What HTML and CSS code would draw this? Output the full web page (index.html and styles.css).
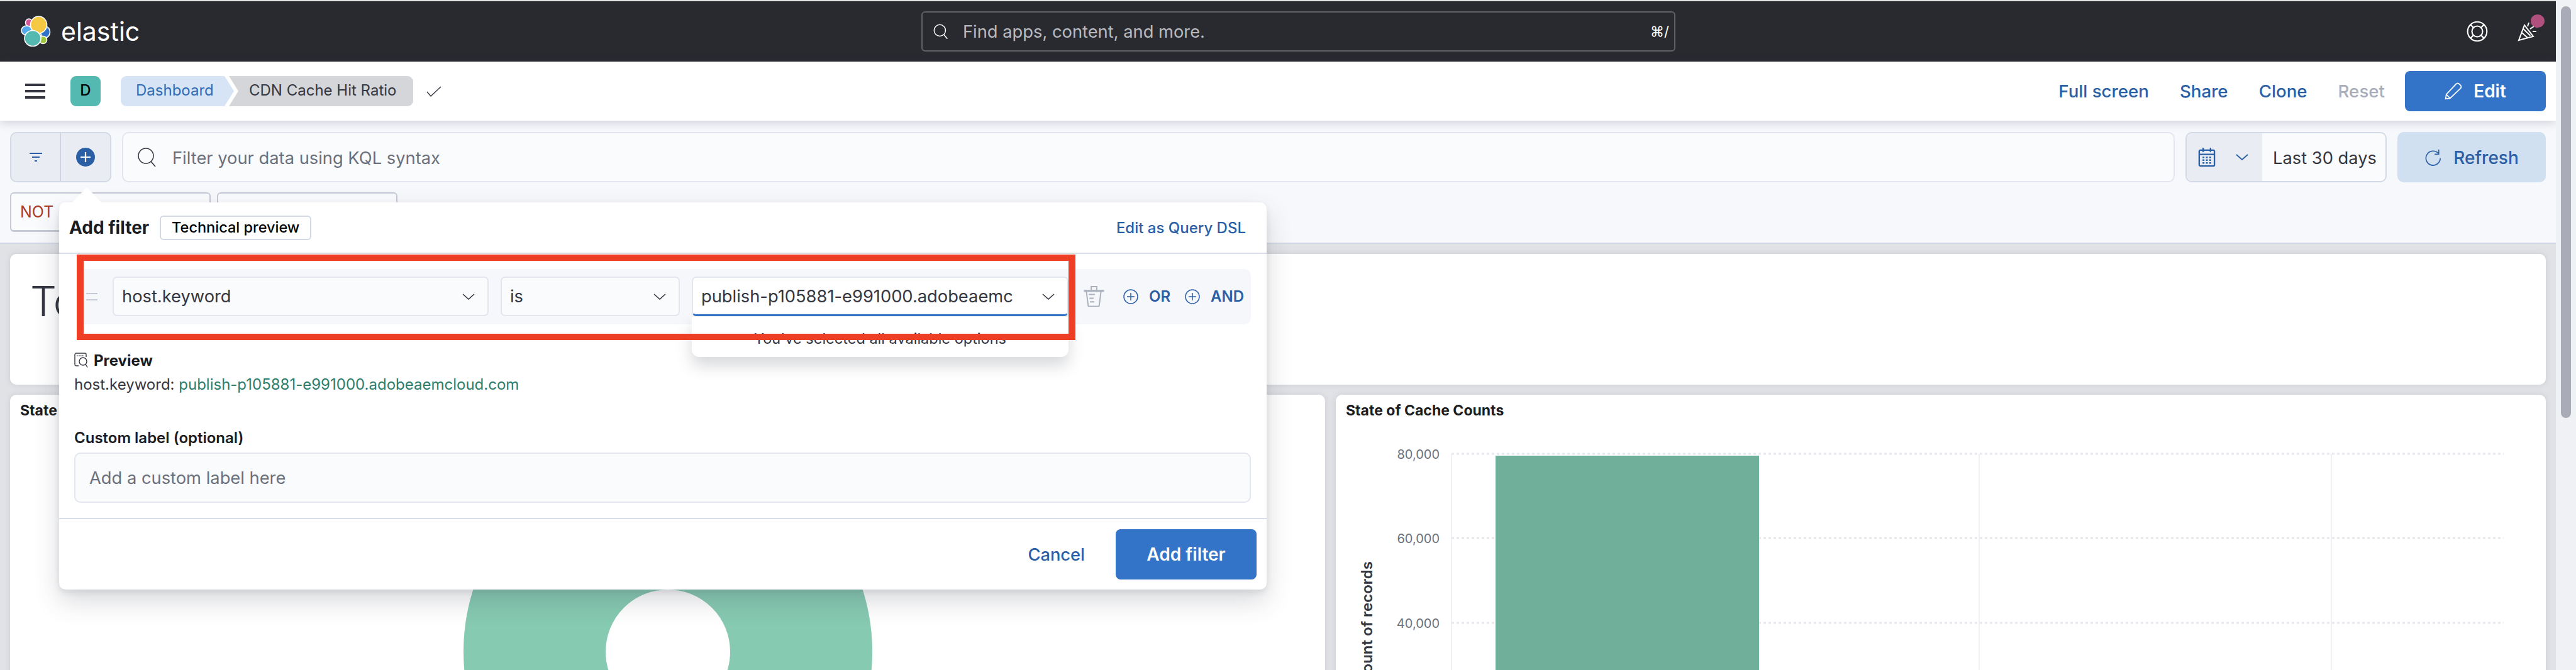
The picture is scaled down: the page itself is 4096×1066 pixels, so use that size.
FILE: index.html
```html
<!DOCTYPE html>
<html>
<head>
<meta charset="utf-8">
<title>CDN Cache Hit Ratio - Elastic</title>
<link rel="stylesheet" href="styles.css">
</head>
<body>
<div id="page">
    <header class="global-header">
        <div class="brand">
            <svg class="logo" width="50" height="50" viewBox="32 25 48 50">
                <g stroke="#fff" stroke-width="1.6">
                    <ellipse cx="45" cy="36" rx="5.5" ry="6" fill="#d6569a"/>
                    <ellipse cx="41.5" cy="48.5" rx="8.5" ry="7.5" fill="#55a9ea"/>
                    <ellipse cx="71" cy="51" rx="7.5" ry="9" fill="#2f72c9"/>
                    <ellipse cx="60.5" cy="39.5" rx="13" ry="13.5" fill="#f6c945"/>
                    <ellipse cx="67.5" cy="63.5" rx="6" ry="6" fill="#9dc63d"/>
                    <ellipse cx="51" cy="61" rx="13" ry="12.5" fill="#54b9b0"/>
                </g>
            </svg>
            <span class="wordmark">elastic</span>
        </div>
        <div class="global-search">
            <svg class="icon" width="26" height="26" viewBox="0 0 16 16" fill="none" stroke="#fff" stroke-width="0.9"><circle cx="7" cy="7" r="5.6"/><path d="M11 11.2l3.4 4"/></svg>
            <span class="global-search-text">Find apps, content, and more.</span>
            <span class="shortcut">⌘/</span>
        </div>
        <div class="global-icons">
            <svg width="34" height="34" viewBox="0 0 16 16" fill="none" stroke="#fff" stroke-width="1"><circle cx="8" cy="8" r="7.2"/><circle cx="8" cy="8" r="4"/><path d="M3 3l2.2 2.2M13 3l-2.2 2.2M3 13l2.2-2.2M13 13l-2.2-2.2"/></svg>
            <span class="cheer">
                <svg width="34" height="32" viewBox="0 0 16 16" fill="none" stroke="#fff" stroke-width="1"><path d="M1 15l4.5-12 7 9z"/><path d="M3.4 9l4.6 4M4.6 6l5.6 5.4"/><path d="M8 4l1-3M10 6l3-2M12 8h3"/></svg>
                <span class="cheer-dot"></span>
            </span>
        </div>
    </header>

    <div class="app-header">
        <span class="hamburger"><i></i><i></i><i></i></span>
        <span class="space-badge">D</span>
        <div class="crumbs">
            <span class="crumb crumb-link">Dashboard</span>
            <span class="crumb crumb-current">CDN Cache Hit Ratio</span>
        </div>
        <svg class="saved" width="24" height="17" viewBox="0 0 24 17" fill="none" stroke="#343741" stroke-width="1.400"><path d="M1 9l6 7L23 1"/></svg>
        <nav class="app-menu">
            <a>Full screen</a>
            <a>Share</a>
            <a>Clone</a>
            <a class="disabled">Reset</a>
            <button class="btn-fill btn-edit">
                <svg width="28" height="28" viewBox="0 0 16 16" fill="none" stroke="#fff" stroke-width="1"><path d="M1 15l.6-4L10.500 1.500c.8-.8 2-.8 2.800 0l1.200 1.200c.8.800.8 2 0 2.800L5 14.500z"/><path d="M1.600 11L5 14.500"/></svg>
                Edit
            </button>
        </nav>
    </div>

    <div class="query-bar">
        <div class="filter-group">
            <span class="filter-btn">
                <svg width="20" height="14" viewBox="0 0 20 14" fill="#2a5fa6"><rect width="20" height="2"/><rect x="4" y="6" width="12" height="2"/><rect x="8" y="12" width="4" height="2"/></svg>
            </span>
            <span class="filter-btn">
                <svg width="30" height="30" viewBox="0 0 30 30"><circle cx="15" cy="15" r="15" fill="#2a5fa6"/><path d="M15 7v16M7 15h16" stroke="#fff" stroke-width="2.200"/></svg>
            </span>
        </div>
        <div class="query-input">
            <svg class="icon" width="32" height="32" viewBox="0 0 16 16" fill="none" stroke="#343741" stroke-width="0.8"><circle cx="7" cy="7" r="6"/><path d="M11 11.500l3.500 4"/></svg>
            <span class="placeholder">Filter your data using KQL syntax</span>
        </div>
        <div class="date-picker">
            <span class="date-prepend">
                <svg width="28" height="31" viewBox="0 0 28 32" fill="none" stroke="#2a5fa6" stroke-width="2.400"><rect x="1.500" y="4" width="25" height="26" rx="2"/><path d="M1.500 11h25M8 0v7M20 0v7"/><path d="M7 16h14M7 20.500h14M7 25h14" stroke-width="2.600" stroke-dasharray="3 2.500"/></svg>
                <svg width="20" height="10" viewBox="0 0 20 10" fill="none" stroke="#2a5fa6" stroke-width="1.800"><path d="M1 1l9 8 9-8"/></svg>
            </span>
            <span class="date-text">Last 30 days</span>
        </div>
        <button class="btn-refresh">
            <svg width="26" height="26" viewBox="0 0 16 16" fill="none" stroke="#2a5fa6" stroke-width="1"><path d="M13.500 3.500a7 7 0 1 0 2 5"/><path d="M14 0v4.500H10"/></svg>
            Refresh
        </button>
    </div>

    <div class="pill-row">
        <span class="pill pill-one"><b>NOT</b> u</span>
        <span class="pill pill-two"></span>
    </div>

    <main class="panels">
        <section class="panel panel-wide"><span class="metric-title">Total</span></section>
        <section class="panel">
            <h3>State of Cache</h3>
            <svg class="chart" width="2091" height="400">
                <circle cx="1046" cy="359" r="212" fill="none" stroke="#86cab1" stroke-width="226"/>
            </svg>
        </section>
        <section class="panel">
            <h3>State of Cache Counts</h3>
            <svg class="chart" width="1924" height="400">
                <g stroke="#ecedf1" stroke-width="1.500">
                    <path d="M184 44v356M1023 44v356M1583 44v356"/>
                </g>
                <g stroke="#e6e8ee" stroke-width="3" stroke-dasharray="4 4">
                    <path d="M184 44h1673M184 178h1673M184 313h1673"/>
                </g>
                <rect x="254" y="47" width="419" height="353" fill="#70b09a"/>
                <g class="tick">
                    <text x="165" y="52">80,000</text>
                    <text x="165" y="186">60,000</text>
                    <text x="165" y="321">40,000</text>
                </g>
                <text class="axis-title" transform="translate(58 215) rotate(-90)">Count of records</text>
            </svg>
        </section>
    </main>

    <div class="popover">
        <span class="popover-arrow"></span>
        <div class="popover-head">
            <strong class="popover-title">Add filter</strong>
            <span class="tech-badge">Technical preview</span>
            <a class="edit-dsl">Edit as Query DSL</a>
        </div>
        <div class="filter-row">
            <span class="handle"></span>
            <div class="select select-field">host.keyword
                <svg class="chev" width="20" height="10" viewBox="0 0 20 10" fill="none" stroke="#343741" stroke-width="1.600"><path d="M1 1l9 8 9-8"/></svg>
            </div>
            <div class="select select-op">is
                <svg class="chev" width="20" height="10" viewBox="0 0 20 10" fill="none" stroke="#343741" stroke-width="1.600"><path d="M1 1l9 8 9-8"/></svg>
            </div>
            <div class="select select-value">
                <span class="value-text">publish-p105881-e991000.adobeaemcloud.com</span>
                <svg class="chev" width="20" height="10" viewBox="0 0 20 10" fill="none" stroke="#343741" stroke-width="1.600"><path d="M1 1l9 8 9-8"/></svg>
                <div class="value-menu">You've selected all available options</div>
            </div>
            <svg class="trash" width="33" height="33" viewBox="0 0 33 34" fill="none" stroke="#a9b0bd" stroke-width="2"><path d="M0 8h33" stroke-width="3"/><path d="M12 8V1h9v7M4 9l3 23c0 1 1 1.500 2 1.500h14c1 0 2-.5 2-1.500l3-23"/><path d="M8 14h10M9 20h7M10 26h7"/></svg>
            <span class="logic">
                <svg width="24" height="24" viewBox="0 0 24 24" fill="none" stroke="#2a5fa6" stroke-width="1.500"><circle cx="12" cy="12" r="11"/><path d="M12 6v12M6 12h12"/></svg>OR
            </span>
            <span class="logic">
                <svg width="24" height="24" viewBox="0 0 24 24" fill="none" stroke="#2a5fa6" stroke-width="1.500"><circle cx="12" cy="12" r="11"/><path d="M12 6v12M6 12h12"/></svg>AND
            </span>
        </div>
        <div class="preview">
            <div class="preview-label">
                <svg width="24" height="24" viewBox="0 0 24 24" fill="none" stroke="#343741" stroke-width="1.400"><path d="M7 21H3c-1 0-2-1-2-2V3c0-1 1-2 2-2h14c1 0 2 1 2 2v4"/><path d="M4 5h12" stroke-dasharray="1.500 1.500"/><circle cx="14" cy="14" r="6"/><path d="M18 18.500l3 5"/></svg>
                Preview
            </div>
            <div class="preview-value">host.keyword: <span class="green">publish-p105881-e991000.adobeaemcloud.com</span></div>
        </div>
        <label class="custom-label">Custom label (optional)</label>
        <div class="custom-input">Add a custom label here</div>
        <div class="popover-foot">
            <a class="cancel">Cancel</a>
            <button class="btn-fill btn-add">Add filter</button>
        </div>
    </div>

    <div class="callout"></div>
</div>
<aside class="scrollbar"><span class="thumb"></span></aside>
</body>
</html>
```

FILE: styles.css
```css
html, body {
    margin: 0;
    height: 1066px;
    overflow: hidden;
}

body {
    display: flex;
    font-family: Inter, "Noto Sans", sans-serif;
    font-size: 27.3px;
    color: #343741;
    background-color: #f7f8fb;
}

#page {
    position: relative;
    width: 4064px;
    height: 1066px;
    overflow: hidden;
}

.scrollbar {
    width: 32px;
    padding: 10px 8px 0;
    box-sizing: border-box;
    background-color: #f0f1f5;
}

.thumb {
    display: block;
    height: 655px;
    border-radius: 8px;
    background-color: #a9acb6;
}

/* dark bar */
.global-header {
    display: flex;
    align-items: center;
    height: 96px;
    border-top: 2px solid #e2e2e4;
    padding: 0 28px 0 32px;
    background-color: #292a2f;
}

.brand {
    display: flex;
    align-items: center;
    width: 1433px;
}

.logo {
    margin-right: 15px;
}

.wordmark {
    color: #fff;
    font-size: 41px;
    line-height: 50px;
}

.global-search {
    display: flex;
    align-items: center;
    width: 1199px;
    height: 64px;
    box-sizing: border-box;
    border: 2px solid #5f6166;
    border-radius: 6px;
    padding: 0 8px 0 16px;
    color: #b8bac0;
}

.global-search-text {
    flex: 1;
    margin-left: 22px;
}

.shortcut {
    color: #fff;
    font-size: 22px;
}

.global-icons {
    display: flex;
    align-items: center;
    gap: 46px;
    margin-left: auto;
}

.cheer {
    position: relative;
    display: flex;
}

.cheer-dot {
    position: absolute;
    top: -11px;
    right: -10px;
    width: 22px;
    height: 21px;
    border-radius: 50%;
    background-color: #b0507f;
}

/* breadcrumb bar */
.app-header {
    display: flex;
    align-items: center;
    height: 94px;
    padding: 0 16px 0 40px;
    background-color: #fff;
    box-shadow: 0 3px 14px rgba(60, 70, 100, 0.22);
    position: relative;
}

.hamburger {
    display: flex;
    flex-direction: column;
    justify-content: space-between;
    width: 32px;
    height: 24px;
    margin-right: 40px;
}

.hamburger i {
    height: 4px;
    background-color: #343741;
}

.space-badge {
    width: 48px;
    height: 48px;
    line-height: 46px;
    border-radius: 9px;
    background-color: #54b9b0;
    color: #000;
    text-align: center;
    font-size: 24px;
    font-weight: 500;
    margin-right: 32px;
}

.crumbs {
    display: flex;
    height: 48px;
    font-size: 24px;
    line-height: 46px;
}

.crumb {
    padding: 0 24px;
    white-space: nowrap;
}

.crumb-link {
    width: 180px;
    box-sizing: border-box;
    padding-right: 0;
    background-color: #d6e4f5;
    color: #2f6cb5;
    border-radius: 9px 0 0 9px;
    clip-path: polygon(0 0, 165px 0, 180px 50%, 165px 100%, 0 100%);
}

.crumb-current {
    width: 293px;
    box-sizing: border-box;
    margin-left: -8px;
    padding-left: 32px;
    background-color: #d5d6d9;
    border-radius: 0 9px 9px 0;
    clip-path: polygon(0 0, 100% 0, 100% 100%, 0 100%, 15px 50%);
}

.saved {
    margin-left: 21px;
}

.app-menu {
    display: flex;
    align-items: center;
    margin-left: auto;
    color: #2a5fa6;
    font-size: 27.7px;
    font-weight: 500;
}

.app-menu a {
    margin-right: 49px;
}

.app-menu a.disabled {
    margin-right: 32px;
    color: #a7adb9;
}

.btn-fill {
    display: flex;
    align-items: center;
    justify-content: center;
    border: none;
    border-radius: 8px;
    background-color: #3374c8;
    color: #fff;
    font-family: inherit;
    font-size: 28px;
    font-weight: 600;
}

.btn-edit {
    gap: 18px;
    width: 224px;
    height: 64px;
}

/* query row */
.query-bar {
    display: flex;
    height: 80px;
    margin-top: 18px;
    padding: 0 16px;
}

.filter-group {
    display: flex;
    width: 161px;
    box-sizing: border-box;
    border: 2px solid #d3dae6;
    border-radius: 10px;
    background-color: #e9edf3;
}

.filter-btn {
    flex: 1;
    display: flex;
    align-items: center;
    justify-content: center;
}

.filter-btn + .filter-btn {
    border-left: 1px solid #c5cad6;
}

.query-input {
    display: flex;
    align-items: center;
    width: 3264px;
    box-sizing: border-box;
    margin-left: 17px;
    padding-left: 22px;
    border: 2px solid #e3e6ef;
    border-radius: 10px;
    background-color: #fafbfd;
}

.placeholder {
    margin-left: 24px;
    padding-top: 3px;
    color: #6a717d;
}

.date-picker {
    display: flex;
    width: 320px;
    box-sizing: border-box;
    margin-left: 17px;
    border: 2px solid #d3dae6;
    border-radius: 10px;
    background-color: #fafbfd;
    overflow: hidden;
}

.date-prepend {
    display: flex;
    align-items: center;
    gap: 32px;
    width: 120px;
    box-sizing: border-box;
    padding-left: 18px;
    background-color: #e9edf3;
}

.date-text {
    align-self: center;
    margin-left: 17px;
    padding-top: 3px;
    white-space: nowrap;
}

.btn-refresh {
    display: flex;
    align-items: center;
    justify-content: center;
    gap: 20px;
    width: 236px;
    margin-left: 17px;
    padding-top: 2px;
    border: none;
    border-radius: 10px;
    background-color: #d0e0f0;
    color: #2a5fa6;
    font-family: inherit;
    font-size: 28px;
    font-weight: 500;
}

.pill-row {
    display: flex;
    gap: 10px;
    height: 63px;
    margin-top: 16px;
    padding: 0 16px 17px;
    border-bottom: 2px solid #d3dae6;
}

.pill {
    height: 63px;
    box-sizing: border-box;
    padding: 12px 14px;
    border: 2px solid #c5cad6;
    border-bottom-width: 3px;
    border-radius: 6px;
    background-color: #fafbfd;
    font-size: 25px;
    line-height: 34px;
    white-space: nowrap;
    overflow: hidden;
}

.pill b {
    color: #a93b28;
    font-weight: 400;
}

.pill-one {
    width: 319px;
}

.pill-two {
    width: 287px;
}

/* dashboard */
.panels {
    display: grid;
    grid-template-columns: 2091px 1924px;
    column-gap: 17px;
    row-gap: 16px;
    height: 662px;
    overflow: hidden;
    padding: 16px 16px 0;
    background-color: #e1e2e6;
}

.panel {
    height: 460px;
    border-radius: 10px;
    background-color: #fff;
    box-shadow: 0 0 10px rgba(100, 110, 140, 0.18);
}

.panel-wide {
    grid-column: 1 / 3;
    height: 208px;
    padding: 35px 32px 0;
    box-sizing: border-box;
}

.metric-title {
    font-size: 66px;
    font-weight: 300;
}

.panel h3 {
    margin: 0;
    padding: 10px 16px 0;
    height: 40px;
    color: #1a1c21;
    font-size: 23px;
    font-weight: 700;
    line-height: 30px;
}

.chart {
    display: block;
}

.tick text {
    fill: #6a717d;
    font-size: 20px;
    text-anchor: end;
}

.axis-title {
    fill: #343741;
    font-size: 24px;
    font-weight: 600;
    text-anchor: end;
}

/* add filter popover */
.popover {
    position: absolute;
    left: 94px;
    top: 322px;
    width: 1920px;
    height: 616px;
    border-radius: 10px;
    background-color: #fff;
    box-shadow: 0 18px 40px rgba(60, 65, 80, 0.2), 0 4px 10px rgba(60, 65, 80, 0.12);
}

.popover-arrow {
    position: absolute;
    left: 21px;
    top: -24px;
    width: 46px;
    height: 24px;
    background-color: #fff;
    clip-path: polygon(50% 0, 100% 100%, 0 100%);
}

.popover-head {
    display: flex;
    align-items: center;
    height: 80px;
    padding: 0 33px 0 16px;
    border-bottom: 2px solid #d9dde8;
}

.popover-title {
    color: #1a1c21;
    font-size: 28px;
    font-weight: 700;
}

.tech-badge {
    width: 241px;
    height: 39px;
    box-sizing: border-box;
    margin-left: 17px;
    border: 2px solid #d3dae6;
    border-radius: 6px;
    color: #000;
    font-size: 23.5px;
    font-weight: 500;
    line-height: 34px;
    text-align: center;
    white-space: nowrap;
}

.edit-dsl {
    margin-left: auto;
    color: #2a5fa6;
    font-size: 24px;
    font-weight: 500;
}

.filter-row {
    display: flex;
    align-items: center;
    gap: 19px;
    height: 88px;
    box-sizing: border-box;
    margin: 24px 25px 0 31px;
    padding: 0 0 1px 12px;
    border-radius: 10px;
    background-color: #f5f7fa;
}

.filter-row > * {
    flex-shrink: 0;
}

.handle {
    width: 18px;
    height: 8px;
    margin-right: 5px;
    border-top: 2px solid #c5cad6;
    border-bottom: 2px solid #c5cad6;
}

.select {
    position: relative;
    display: flex;
    align-items: center;
    height: 63px;
    box-sizing: border-box;
    padding-left: 13px;
    border: 2px solid #e3e6ef;
    border-radius: 7px;
    background-color: #fafbfd;
}

.chev {
    position: absolute;
    right: 20px;
    top: 25px;
}

.select-field {
    width: 598px;
}

.select-op {
    width: 285px;
}

.select-value {
    width: 599px;
    border-bottom: 3px solid #3374c8;
    background-color: #fff;
}

.value-text {
    width: 497px;
    overflow: hidden;
    white-space: nowrap;
}

.value-menu {
    position: absolute;
    left: -2px;
    right: -2px;
    top: 62px;
    height: 64px;
    padding-top: 20px;
    box-sizing: border-box;
    border-radius: 0 0 12px 12px;
    background-color: #fff;
    box-shadow: 0 14px 24px rgba(60, 65, 80, 0.2);
    text-align: center;
    font-size: 23.5px;
}

.trash {
    margin: 0 7px 0 5px;
}

.logic {
    display: flex;
    align-items: center;
    gap: 17px;
    margin-left: 4px;
    color: #2a5fa6;
    font-size: 24px;
    font-weight: 600;
}

.preview {
    margin: 45px 0 0 24px;
}

.preview-label {
    display: flex;
    align-items: center;
    gap: 7px;
    height: 24px;
    color: #1a1c21;
    font-size: 24px;
    font-weight: 700;
}

.preview-value {
    margin-top: 12px;
    font-size: 24px;
    line-height: 30px;
}

.green {
    color: #2c7d6c;
}

.custom-label {
    display: block;
    margin: 55px 0 0 24px;
    color: #1a1c21;
    font-size: 24px;
    font-weight: 600;
    line-height: 30px;
}

.custom-input {
    width: 1871px;
    height: 80px;
    box-sizing: border-box;
    margin: 8px 0 0 24px;
    padding-left: 22px;
    border: 2px solid #e3e6ef;
    border-radius: 10px;
    background-color: #fafbfd;
    color: #6a717d;
    line-height: 77px;
}

.popover-foot {
    display: flex;
    align-items: center;
    justify-content: flex-end;
    height: 112px;
    margin-top: 24px;
    padding-right: 16px;
    border-top: 2px solid #d9dde8;
}

.cancel {
    margin-right: 49px;
    color: #2a5fa6;
    font-weight: 500;
}

.btn-add {
    width: 224px;
    height: 80px;
}

/* red annotation drawn over the shot */
.callout {
    position: absolute;
    left: 122px;
    top: 405px;
    width: 1588px;
    height: 136px;
    box-sizing: border-box;
    border: solid #ee3f26;
    border-width: 10px 11px;
    pointer-events: none;
}
```
